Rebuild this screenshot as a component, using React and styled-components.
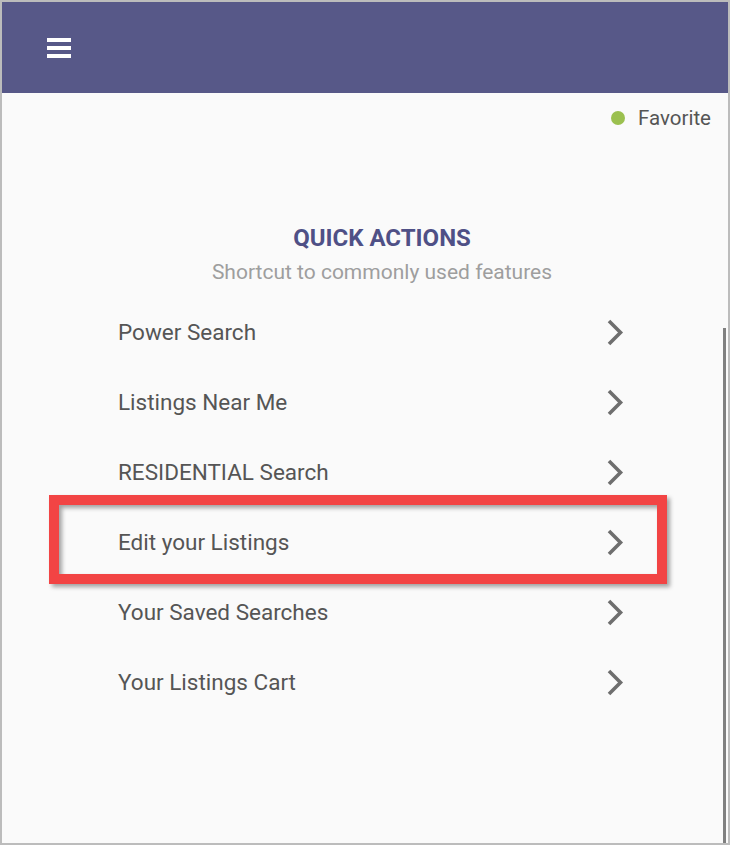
import React from "react";
import styled, { createGlobalStyle } from "styled-components";

const GlobalStyle = createGlobalStyle`
  body {
    margin: 0;
    background: #fafafa;
    font-family: Roboto, "Liberation Sans", sans-serif;
  }
`;

const Frame = styled.div`
  position: relative;
  width: 730px;
  height: 845px;
  box-sizing: border-box;
  border: 2px solid #bcbcbc;
  background: #fafafa;
  overflow: hidden;
`;

const Header = styled.header`
  height: 91px;
  background: #575888;
  display: flex;
  align-items: center;
  padding-left: 45px;
`;

const MenuButton = styled.div`
  display: flex;
  flex-direction: column;
  gap: 4px;
  cursor: pointer;
`;

const MenuBar = styled.span`
  display: block;
  width: 24px;
  height: 4px;
  background: #ffffff;
`;

const FavoriteBar = styled.div`
  display: flex;
  justify-content: flex-end;
  align-items: center;
  gap: 13px;
  margin-top: 13px;
  padding-right: 17px;
  font-size: 20.5px;
  line-height: 24px;
  color: #555555;
`;

const Dot = styled.span`
  width: 14px;
  height: 14px;
  border-radius: 50%;
  background: ${(p) => p.color};
`;

const Section = styled.section`
  width: 528px;
  margin: 0 0 0 116px;
`;

const Title = styled.h2`
  margin: 94px 0 0;
  text-align: center;
  font-size: 24px;
  line-height: 28px;
  font-weight: 700;
  color: #4f5086;
`;

const Subtitle = styled.p`
  margin: 8px 0 0;
  text-align: center;
  font-size: 21px;
  line-height: 24px;
  color: #9e9e9e;
`;

const List = styled.ul`
  list-style: none;
  margin: 13px 0 0;
  padding: 0;
`;

const Row = styled.li`
  position: relative;
  height: 70px;
  display: flex;
  align-items: center;
  justify-content: space-between;
  padding-right: 22px;
  font-size: 22.5px;
  color: #555555;
  cursor: pointer;
`;

const Highlight = styled.span`
  position: absolute;
  left: -69px;
  right: -21px;
  top: -12px;
  bottom: -7px;
  border: 10px solid #f24444;
  filter: drop-shadow(3px 3px 2px rgba(0, 0, 0, 0.35));
  pointer-events: none;
`;

const Scrollbar = styled.div`
  position: absolute;
  right: 2px;
  top: 326px;
  bottom: 0;
  width: 3px;
  background: #808080;
`;

const Chevron = () => (
  <svg width="18" height="29" viewBox="0 0 18 29">
    <polyline
      points="3,3 14.5,14.5 3,26"
      fill="none"
      stroke="#6e6e6e"
      strokeWidth="3.6"
    />
  </svg>
);

const actions = [
  "Power Search",
  "Listings Near Me",
  "RESIDENTIAL Search",
  "Edit your Listings",
  "Your Saved Searches",
  "Your Listings Cart",
];

const App = () => (
  <Frame>
    <GlobalStyle />
    <Header>
      <MenuButton>
        <MenuBar />
        <MenuBar />
        <MenuBar />
      </MenuButton>
    </Header>
    <FavoriteBar>
      <Dot color="#9bc04f" />
      Favorite
    </FavoriteBar>
    <Section>
      <Title>QUICK ACTIONS</Title>
      <Subtitle>Shortcut to commonly used features</Subtitle>
      <List>
        {actions.map((label) => (
          <Row key={label}>
            {label}
            <Chevron />
            {label === "Edit your Listings" && <Highlight />}
          </Row>
        ))}
      </List>
    </Section>
    <Scrollbar />
  </Frame>
);

export default App;
